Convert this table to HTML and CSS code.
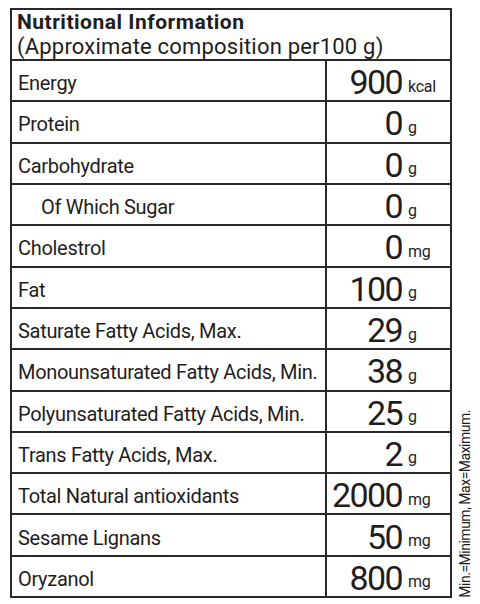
FILE: index.html
```html
<!DOCTYPE html>
<html lang="en">
<head>
    <meta charset="UTF-8">
    <meta name="viewport" content="width=device-width, initial-scale=1.0">
    <title>Nutritional Information</title>
    <link rel="stylesheet" href="styles.css">
</head>
<body>
    <div class="label">
        <div class="panel">
            <div class="head">
                <h1>Nutritional Information</h1>
                <p>(Approximate composition per100 g)</p>
            </div>

            <div class="row"><span class="name">Energy</span><span class="val"><b>900</b><i>kcal</i></span></div>
            <div class="row"><span class="name">Protein</span><span class="val"><b>0</b><i>g</i></span></div>
            <div class="row"><span class="name">Carbohydrate</span><span class="val"><b>0</b><i>g</i></span></div>
            <div class="row"><span class="name sub">Of Which Sugar</span><span class="val"><b>0</b><i>g</i></span></div>
            <div class="row"><span class="name">Cholestrol</span><span class="val"><b>0</b><i>mg</i></span></div>
            <div class="row"><span class="name">Fat</span><span class="val"><b>100</b><i>g</i></span></div>
            <div class="row"><span class="name">Saturate Fatty Acids, Max.</span><span class="val"><b>29</b><i>g</i></span></div>
            <div class="row"><span class="name">Monounsaturated Fatty Acids, Min.</span><span class="val"><b>38</b><i>g</i></span></div>
            <div class="row"><span class="name">Polyunsaturated Fatty Acids, Min.</span><span class="val"><b>25</b><i>g</i></span></div>
            <div class="row"><span class="name">Trans Fatty Acids, Max.</span><span class="val"><b>2</b><i>g</i></span></div>
            <div class="row"><span class="name">Total Natural antioxidants</span><span class="val"><b>2000</b><i>mg</i></span></div>
            <div class="row"><span class="name">Sesame Lignans</span><span class="val"><b>50</b><i>mg</i></span></div>
            <div class="row"><span class="name">Oryzanol</span><span class="val"><b>800</b><i>mg</i></span></div>
        </div>

        <div class="note">Min.=Minimum, Max=Maximum.</div>
    </div>
</body>
</html>
```

FILE: styles.css
```css
* {
    box-sizing: border-box;
}

body {
    margin: 0;
    padding: 0;
    background-color: #ffffff;
    color: #1f1d1d;
    font-family: 'Roboto', sans-serif;
}

.label {
    display: flex;
    align-items: flex-end;
    padding: 8px 0 0 10px;
}

.panel {
    display: flex;
    flex-direction: column;
    width: 442px;
    height: 590px;
    border: 2px solid #2b2828;
}

.head {
    height: 51px;
    flex: none;
    padding: 0 6px 0 5px;
    border-bottom: 2px solid #2b2828;
}

.head h1 {
    margin: 0;
    font-size: 21px;
    font-weight: 700;
    line-height: 24px;
    letter-spacing: 0.5px;
}

.head p {
    margin: 0;
    font-size: 22px;
    line-height: 25px;
    letter-spacing: 0.2px;
}

.row {
    flex: 1;
    min-height: 0;
    display: grid;
    grid-template-columns: 1fr 123px;
    border-bottom: 2px solid #2b2828;
}

.row:last-child {
    border-bottom: none;
}

.name {
    display: flex;
    align-items: center;
    padding: 5px 0 0 6px;
    border-right: 2px solid #2b2828;
    font-size: 20px;
    letter-spacing: -0.3px;
    white-space: nowrap;
}

.name.sub {
    padding-left: 29px;
}

.val {
    display: grid;
    grid-template-columns: 75px 1fr;
    align-items: center;
}

.val b {
    text-align: right;
    font-size: 34px;
    font-weight: 400;
    line-height: 32px;
    letter-spacing: -1.6px;
    padding-top: 3px;
}

.val i {
    font-style: normal;
    font-size: 16px;
    line-height: 18px;
    letter-spacing: -0.3px;
    padding-left: 6px;
    padding-top: 12px;
}

.note {
    writing-mode: vertical-rl;
    transform: rotate(180deg);
    font-size: 14px;
    margin-left: 5px;
    margin-bottom: 0;
    letter-spacing: -0.5px;
    white-space: nowrap;
}
```
